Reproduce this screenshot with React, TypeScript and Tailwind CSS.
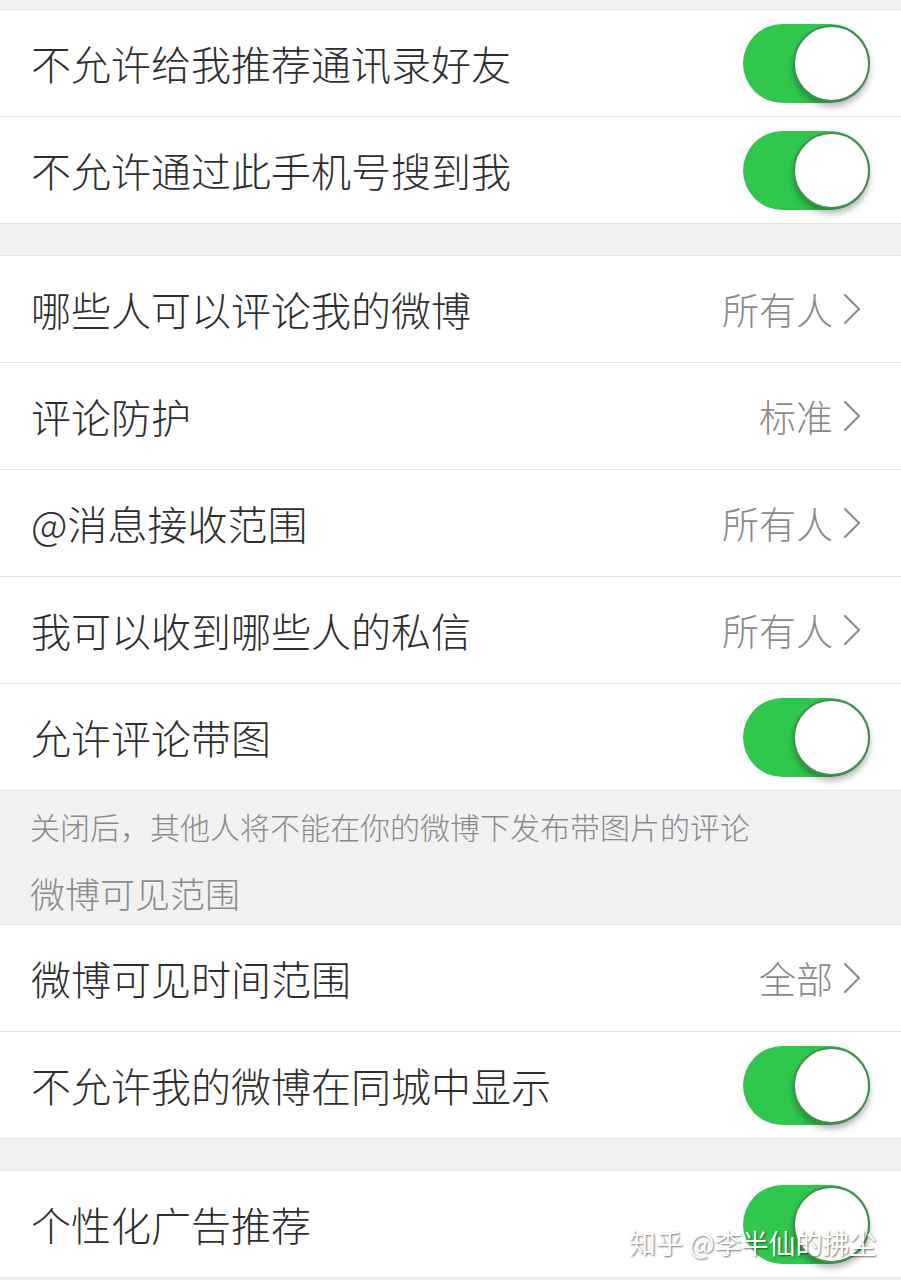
import React from "react";

const FONT = { fontFamily: '"Noto Sans CJK SC", "Noto Sans", sans-serif' };

function Toggle() {
  return (
    <div className="relative h-[79px] w-[127px] shrink-0 rounded-full bg-[#2fc84c]">
      <div className="absolute right-0 top-[1px] h-[77px] w-[77px] rounded-full border-2 border-[#4a8a55] bg-white shadow-[0_5px_6px_rgba(0,0,0,0.28)]" />
    </div>
  );
}

function Chevron() {
  return (
    <svg width="18" height="32" viewBox="0 0 18 32" className="shrink-0">
      <polyline points="2,2 16,16 2,30" fill="none" stroke="#8e8e8e" strokeWidth="2.2" strokeLinecap="round" strokeLinejoin="round" />
    </svg>
  );
}

function Row({ label, value, toggle }: { label: string; value?: string; toggle?: boolean }) {
  return (
    <div className="flex h-[107px] items-center justify-between border-b border-[#e3e3e3] bg-white pl-[31px] pr-[31px]">
      <span className="text-[40px] font-light leading-none text-[#2e2e2e]">{label}</span>
      {toggle ? (
        <Toggle />
      ) : (
        <div className="flex items-center gap-[10px] pr-[9px]">
          <span className="text-[37px] font-light leading-none text-[#8a8a8a]">{value}</span>
          <Chevron />
        </div>
      )}
    </div>
  );
}

export default function App() {
  return (
    <div className="relative min-h-[1280px] w-[901px] overflow-hidden bg-[#f1f1f1]" style={FONT}>
      <div className="h-[9px]" />
      <div className="border-t border-[#e3e3e3]">
        <Row label="不允许给我推荐通讯录好友" toggle />
        <Row label="不允许通过此手机号搜到我" toggle />
      </div>
      <div className="h-[31px]" />
      <div className="border-t border-[#e3e3e3]">
        <Row label="哪些人可以评论我的微博" value="所有人" />
        <Row label="评论防护" value="标准" />
        <Row label="@消息接收范围" value="所有人" />
        <Row label="我可以收到哪些人的私信" value="所有人" />
        <Row label="允许评论带图" toggle />
      </div>
      <div className="flex h-[133px] flex-col pl-[30px]">
        <div className="pt-[20px] text-[30px] font-light leading-[30px] text-[#8a8a8a]">
          关闭后，其他人将不能在你的微博下发布带图片的评论
        </div>
        <div className="pt-[34px] text-[35px] font-light leading-[35px] text-[#8a8a8a]">微博可见范围</div>
      </div>
      <div className="border-t border-[#e3e3e3]">
        <Row label="微博可见时间范围" value="全部" />
        <Row label="不允许我的微博在同城中显示" toggle />
      </div>
      <div className="h-[31px]" />
      <div className="border-t border-[#e3e3e3]">
        <Row label="个性化广告推荐" toggle />
      </div>
      <div className="absolute left-[629px] top-[1225px] text-[27px] leading-[36px] text-white [text-shadow:1px_1px_2px_rgba(0,0,0,0.55)]">
        知乎 @李半仙的拂尘
      </div>
    </div>
  );
}
